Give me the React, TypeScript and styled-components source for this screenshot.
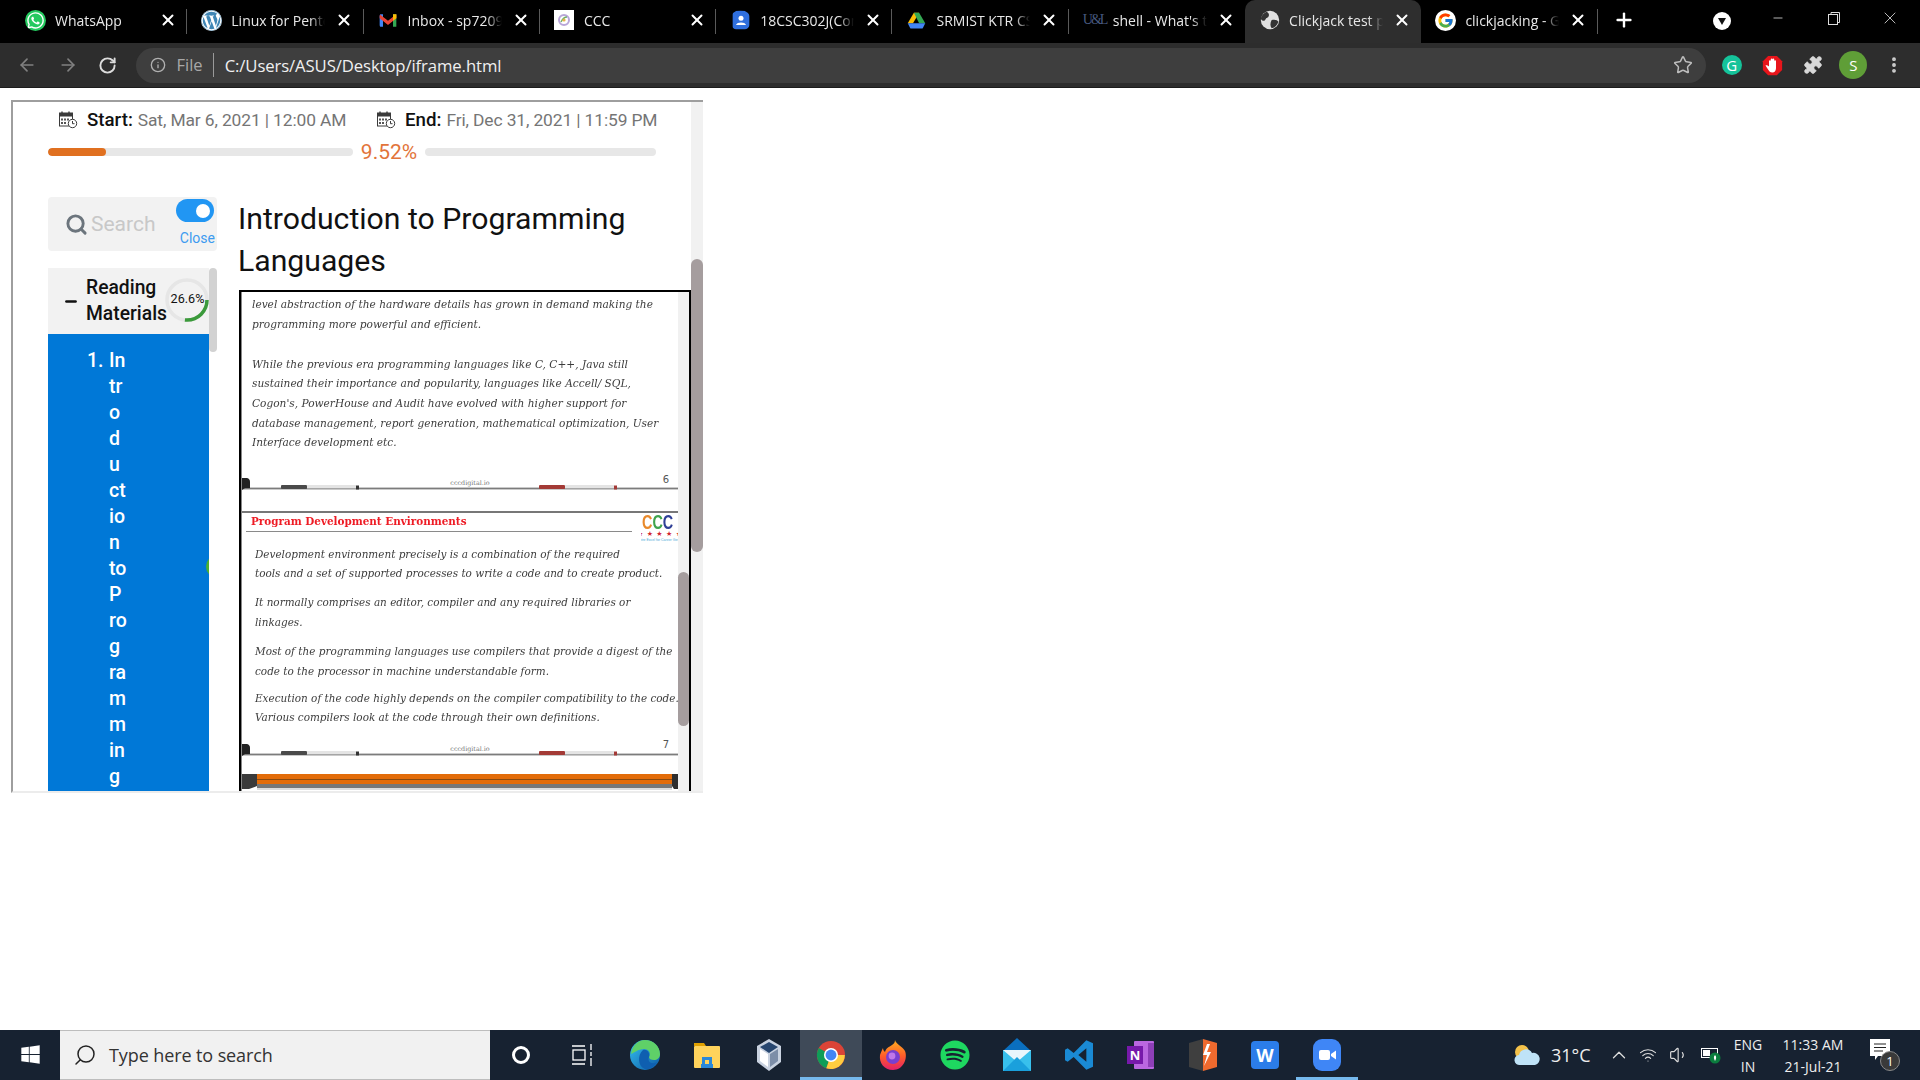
import React from "react";
import styled, { createGlobalStyle } from "styled-components";
import { ArrowLeft, ArrowRight, RotateCw, Info, Star, X, Plus, Minus, Search, EllipsisVertical, Puzzle, ChevronUp, Volume1, Wifi } from "lucide-react";
import { FaWhatsapp, FaWordpress, FaWindows, FaSpotify } from "react-icons/fa";
import { FcGoogle } from "react-icons/fc";

const Global = createGlobalStyle`
  html, body { margin: 0; padding: 0; background: #fff; }
  * { box-sizing: border-box; }
`;

const Screen = styled.div`
  width: 1920px; height: 1080px; display: flex; flex-direction: column; overflow: hidden;
  font-family: Roboto, "Liberation Sans", sans-serif;
`;

/* ---------- tab strip ---------- */
const TabStrip = styled.div`
  height: 43px; flex: none; background: #000; display: flex; padding-left: 11px; align-items: stretch;
`;
const Tab = styled.div<{ $active?: boolean; $sep?: boolean }>`
  width: 176.3px; flex: none; display: flex; align-items: center; padding: 0 0 3px 14px; position: relative; color: #fff;
  background: ${p => (p.$active ? "#2e2e2e" : "transparent")};
  border-radius: ${p => (p.$active ? "10px 10px 0 0" : "0")};
  &::after {
    content: ""; position: absolute; right: 0; top: 9px; height: 25px; width: 1px;
    background: ${p => (p.$sep ? "#5a5a5a" : "transparent")};
  }
`;
const Fav = styled.span<{ $bg?: string }>`
  width: 21px; height: 21px; flex: none; display: flex; align-items: center; justify-content: center;
  border-radius: 50%; background: ${p => p.$bg ?? "transparent"}; overflow: hidden;
`;
const FavSquare = styled.span`
  width: 20px; height: 20px; flex: none; margin-right: 1px; display: flex; align-items: center; justify-content: center; background: #fff;
`;
const FavLetters = styled.span`
  width: 21px; flex: none; font-family: "Liberation Serif", serif; font-size: 14px; color: #47597f; letter-spacing: -2px; white-space: nowrap;
`;
const TabTitle = styled.span`
  margin-left: 9px; width: 94px; flex: none; overflow: hidden; white-space: nowrap;
  font-family: "Open Sans", sans-serif; font-size: 14px; color: #e8e8e8;
  -webkit-mask-image: linear-gradient(to right, #000 84%, transparent 100%);
  mask-image: linear-gradient(to right, #000 84%, transparent 100%);
`;
const TabClose = styled.span`
  width: 18px; height: 18px; flex: none; margin-left: 10px; display: flex; align-items: center; justify-content: center;
`;
const NewTab = styled.span`
  width: 52px; flex: none; display: flex; align-items: center; justify-content: center; padding-bottom: 3px; color: #fff;
`;
const ProfileDot = styled.span`
  width: 18px; height: 18px; margin: 12px 0 0 63px; border-radius: 50%; background: #fff; flex: none;
  display: flex; align-items: center; justify-content: center;
`;
const WinControls = styled.div`
  display: flex; margin-left: 19px; color: #ddd;
`;
const WinButton = styled.span`
  width: 56px; height: 36px; display: flex; align-items: center; justify-content: center;
`;

/* ---------- toolbar ---------- */
const Toolbar = styled.div`
  height: 45px; flex: none; background: #2d2d2d; display: flex; align-items: center; padding-left: 17px;
  border-bottom: 1px solid #1c1c1c; color: #9a9a9a;
`;
const NavButton = styled.span<{ $dim?: boolean }>`
  width: 40.5px; flex: none; display: flex; color: ${p => (p.$dim ? "#808080" : "#dcdcdc")};
`;
const AddressBar = styled.div`
  width: 1570px; height: 35px; margin-left: -3px; border-radius: 18px; background: #3e3e3e; flex: none;
  display: flex; align-items: center; padding: 0 13px 0 14px;
`;
const Scheme = styled.span`
  margin-left: 11px; padding-right: 10px; border-right: 1px solid #9a9a9a; line-height: 24px;
  font-family: "Open Sans", sans-serif; font-size: 16.5px; color: #a8a8a8;
`;
const Url = styled.span`
  margin-left: 11px; font-family: "Open Sans", sans-serif; font-size: 16.7px; color: #f0f0f0; letter-spacing: -0.1px;
`;
const StarSlot = styled.span`
  margin-left: auto; display: flex; color: #bdbdbd;
`;
const Extensions = styled.div`
  display: flex; align-items: center; margin-left: 6px;
`;
const ExtSlot = styled.span`
  width: 40.5px; flex: none; display: flex; align-items: center; justify-content: center;
`;
const Avatar = styled.span`
  width: 28px; height: 28px; border-radius: 50%; background: #5f9e37; color: #fff; font-size: 15px;
  display: flex; align-items: center; justify-content: center; font-family: "Open Sans", sans-serif;
`;
const GrammarlyBadge = styled.span`
  width: 20px; height: 20px; border-radius: 50%; background: #15c39a; color: #fff; font-size: 15px;
  display: flex; align-items: center; justify-content: center; font-family: "Open Sans", sans-serif;
`;

/* ---------- page ---------- */
const Viewport = styled.div`
  flex: 1; min-height: 0; background: #fff; padding: 12px 0 0 11px;
`;
const Frame = styled.div`
  width: 692px; height: 693px; display: flex; overflow: hidden;
  border-top: 2px solid #9e9e9e; border-left: 2px solid #9e9e9e; border-bottom: 2px solid #ececec;
`;
const FramePage = styled.div`
  width: 678px; flex: none; padding-left: 35px; display: flex; flex-direction: column;
`;
const ScrollTrack = styled.div<{ $w: number }>`
  width: ${p => p.$w}px; flex: none; background: #f1f1f1;
`;
const ScrollThumb = styled.div<{ $top: number; $h: number }>`
  margin-top: ${p => p.$top}px; height: ${p => p.$h}px; background: #a59d9e; border-radius: 6px;
`;
const DatesRow = styled.div`
  height: 36px; flex: none; display: flex; align-items: center; padding-left: 11px;
`;
const DateGroup = styled.div`
  display: flex; align-items: center; width: 318px; white-space: nowrap;
  &:last-child { width: auto; }
`;
const DateLabel = styled.b`
  font-weight: 500; color: #111; margin: 0 5px 0 9px; font-size: 18.7px;
`;
const DateValue = styled.span`
  color: #757575; font-size: 17.4px; letter-spacing: -0.12px;
`;
const ProgressRow = styled.div`
  height: 24px; margin-top: 2px; margin-bottom: 33px; flex: none; display: flex; align-items: center;
`;
const Bar = styled.div<{ $w: number }>`
  width: ${p => p.$w}px; height: 8px; border-radius: 4px; background: #e7e7e7; flex: none; overflow: hidden;
`;
const BarFill = styled.div<{ $w: number }>`
  width: ${p => p.$w}px; height: 100%; background: #e07020; border-radius: 4px;
`;
const Percent = styled.span`
  width: 72px; flex: none; text-align: center; font-size: 21px; color: #e2743a;
`;
const Columns = styled.div`
  display: flex; gap: 22px; flex: 1; min-height: 0;
`;
const Sidebar = styled.aside`
  width: 169px; flex: none; display: flex; flex-direction: column; gap: 17px;
`;
const SearchCard = styled.div`
  height: 54px; flex: none; background: #f2f2f2; border-radius: 4px; display: flex; align-items: center; padding: 0 2px 0 17px;
`;
const SearchHint = styled.span`
  margin-left: 3px; font-size: 21px; color: #c8c8c8;
`;
const CloseColumn = styled.div`
  margin-left: auto; align-self: flex-start; padding-top: 2px; display: flex; flex-direction: column; align-items: flex-end;
`;
const Toggle = styled.div`
  width: 38px; height: 23px; border-radius: 12px; background: #2196f3; position: relative; margin-right: 1px;
  &::after {
    content: ""; position: absolute; right: 4px; top: 4.5px; width: 14px; height: 14px; border-radius: 50%; background: #fff;
  }
`;
const CloseLabel = styled.span`
  margin-top: 9px; font-size: 14px; line-height: 14px; color: #3d9bf0;
`;
const Accordion = styled.div`
  flex: 1; min-height: 0; display: flex;
`;
const AccordionBody = styled.div`
  width: 161px; flex: none; display: flex; flex-direction: column;
`;
const AccordionHead = styled.div`
  height: 66px; flex: none; background: #f2f2f2; display: flex; align-items: center; padding-left: 15px;
`;
const AccordionLabel = styled.div`
  margin-left: 7px; width: 79px; flex: none; font-size: 19.3px; font-weight: 500; line-height: 26px; color: #111;
`;
const Ring = styled.div`
  width: 44px; height: 44px; flex: none; position: relative; margin-top: -2px; display: flex; align-items: center; justify-content: center;
  font-size: 12.6px; color: #111; padding: 0 0 3px 1px;
`;
const RingSvg = styled.svg`
  position: absolute; inset: 0;
`;
const ItemList = styled.div`
  flex: 1; min-height: 0; background: #0078d7; padding: 14px 0 0 39px; display: flex; position: relative; overflow: hidden;
  color: #fff; font-size: 19.5px; font-weight: 500; line-height: 26px;
  &::after {
    content: ""; position: absolute; left: 158px; top: 221px; width: 23px; height: 23px; border-radius: 50%; background: #4caf30;
  }
`;
const ItemNumber = styled.span`
  width: 16px; flex: none; text-align: right; margin-right: 6px;
`;
const ItemText = styled.div`
  display: flex; flex-direction: column;
`;
const SideThumbTrack = styled.div`
  width: 8px; flex: none;
`;
const SideThumb = styled.div`
  height: 84px; background: #d2d2d2; border-radius: 4px;
`;
const Main = styled.main`
  flex: 1; min-width: 0; display: flex; flex-direction: column;
`;
const Title = styled.h1`
  margin: 1px 0 8px -1px; font-size: 30.2px; font-weight: 400; line-height: 42px; color: #111; width: 440px;
`;
const DocFrame = styled.div`
  flex: 1; min-height: 0; display: flex; overflow: hidden;
  border-top: 2px solid #000; border-left: 2px solid #000; border-right: 2px solid #000;
`;
const Slides = styled.div`
  width: 437px; flex: none; overflow: hidden; border-left: 1.5px solid #888;
`;
const Para = styled.p<{ $gap?: number }>`
  margin: ${p => p.$gap ?? 0}px 0 0;
`;
const Line = styled.span`
  display: block; height: 19.7px; line-height: 19.7px; white-space: nowrap; filter: blur(0.25px);
`;
const SlideBody = styled.div<{ $top: number; $left: number; $size: number }>`
  padding: ${p => p.$top}px 0 0 ${p => p.$left}px;
  font-family: "DejaVu Serif", serif; font-style: italic; font-size: ${p => p.$size}px; color: #3c3c3c;
`;
const SlideFooter = styled.div<{ $gap: number; $bottom: number }>`
  margin: ${p => p.$gap}px 0 ${p => p.$bottom}px; display: grid; height: 16px;
  & > * { grid-area: 1 / 1; }
`;
const PageNumber = styled.span<{ $top: number }>`
  justify-self: end; margin: ${p => p.$top}px 10px 0 0; line-height: 10px; font-size: 10px; color: #555; font-family: "DejaVu Sans", sans-serif;
`;
const SlideHead = styled.div`
  height: 34px; border-top: 2.5px solid #777; display: flex; overflow: hidden;
`;
const SlideTitleBox = styled.div`
  width: 386px; height: 19px; margin-left: 4px; padding-left: 5px; flex: none; border-bottom: 1px solid #8a8a8a;
  font-family: "DejaVu Serif", serif; font-weight: 700; font-size: 10.4px; line-height: 17px; color: #ee1c25; white-space: nowrap; filter: blur(0.2px);
`;
const LogoBox = styled.div`
  margin-left: 9px; width: 38px; flex: none; overflow: hidden; display: flex; flex-direction: column; align-items: flex-start; white-space: nowrap;
`;
const LogoLetters = styled.div`
  font-family: "Liberation Sans", sans-serif; font-weight: 700; font-size: 20px; line-height: 18px; margin-left: 1px;
  transform: scaleX(0.72); transform-origin: left center;
`;
const LogoLetter = styled.span<{ $c: string }>`
  color: ${p => p.$c};
`;
const LogoStars = styled.div`
  font-size: 7px; line-height: 7px; color: #d22630; letter-spacing: 3.4px; margin-left: -4px; font-family: "DejaVu Sans", sans-serif;
`;
const LogoTag = styled.div`
  font-size: 3.5px; line-height: 5px; color: #4aa8d8; margin-left: -6px; font-family: "Liberation Sans", sans-serif;
`;
const SlideRule = styled.svg`
  display: block;
`;

/* ---------- taskbar ---------- */
const Taskbar = styled.div`
  height: 50px; flex: none; background: #172231; display: flex; color: #fff;
`;
const StartSlot = styled.div`
  width: 60px; flex: none; display: flex; align-items: center; justify-content: center; padding-bottom: 1px;
`;
const TaskSearch = styled.div`
  width: 430px; flex: none; background: #f1f1f1; border-top: 1px solid #bdbdbd; border-bottom: 1px solid #bdbdbd;
  display: flex; align-items: center; padding-left: 13px; color: #222; gap: 12px;
`;
const TaskSearchText = styled.span`
  font-family: "Open Sans", sans-serif; font-size: 18px; color: #333; letter-spacing: -0.1px;
`;
const TaskIcons = styled.div`
  display: flex;
`;
const TaskIcon = styled.div<{ $active?: boolean; $open?: boolean }>`
  width: 62px; flex: none; display: flex; align-items: center; justify-content: center;
  background: ${p => (p.$active ? "#3f4a58" : "transparent")};
  border-bottom: 3px solid ${p => (p.$active || p.$open ? "#76b9ed" : "transparent")};
  padding-top: 3px;
`;
const Cortana = styled.span`
  width: 18px; height: 18px; border-radius: 50%; border: 3px solid #fff;
`;
const IconLetter = styled.span<{ $bg: string }>`
  width: 28px; height: 28px; border-radius: 4px; background: ${p => p.$bg}; color: #fff; font-family: "Open Sans", sans-serif;
  font-weight: 700; font-size: 18px; display: flex; align-items: center; justify-content: center;
`;
const Tray = styled.div`
  margin-left: auto; display: flex; align-items: center; padding-right: 6px; height: 100%;
  font-family: "Open Sans", sans-serif; color: #eee;
`;
const TrayTemp = styled.span`
  font-size: 18px; margin-left: 10px; width: 57px; flex: none;
`;
const TraySlot = styled.span<{ $w: number }>`
  width: ${p => p.$w}px; flex: none; display: flex; align-items: center; color: #ddd;
`;
const TrayStack = styled.div<{ $w: number }>`
  width: ${p => p.$w}px; flex: none; display: flex; flex-direction: column; gap: 5px; align-items: center; font-size: 14px; line-height: 17px;
`;
const NoteSlot = styled.div`
  width: 30px; height: 32px; flex: none; position: relative; margin-left: 10px; margin-right: 14px;
`;
const NoteBadge = styled.span`
  position: absolute; right: 0; bottom: 0; width: 20px; height: 20px; border-radius: 50%; background: #3a3a3a; border: 1px solid #888;
  font-size: 13px; display: flex; align-items: center; justify-content: center; color: #fff;
`;

/* ---------- small drawings ---------- */
const GmailIcon = () => (
  <svg width="20" height="20" viewBox="0 0 24 24">
    <path d="M2 5h4v15H2z" fill="#4285f4" /><path d="M18 5h4v15h-4z" fill="#34a853" />
    <path d="M2 5l10 8 10-8v5l-10 8L2 10z" fill="#ea4335" /><path d="M18 5h4v5l-4 3z" fill="#fbbc04" />
  </svg>
);
const CccFav = () => (
  <svg width="14" height="14" viewBox="0 0 14 14" fill="none">
    <circle cx="7" cy="7" r="5" stroke="#b9a6d9" strokeWidth="2" /><path d="M4 9c2-4 4-5 6-5" stroke="#6fae6a" strokeWidth="1.5" /><circle cx="7" cy="7" r="1.6" fill="#e8b04a" />
  </svg>
);
const ContactsIcon = () => (
  <svg width="20" height="20" viewBox="0 0 24 24">
    <rect x="2" y="1" width="20" height="22" rx="2" fill="#2f6fde" /><circle cx="12" cy="10" r="3" fill="#fff" /><path d="M6 18c1-4 11-4 12 0z" fill="#fff" />
  </svg>
);
const DriveIcon = () => (
  <svg width="21" height="21" viewBox="0 0 24 24">
    <path d="M9 3h6l-7 12H2z" fill="#fbbc04" /><path d="M15 3l7 12h-7L9 3z" fill="#34a853" /><path d="M2 15l3 6h14l3-6z" fill="#4285f4" />
  </svg>
);
const GlobeIcon = () => (
  <svg width="20" height="20" viewBox="0 0 24 24">
    <circle cx="12" cy="12" r="11" fill="#e0e0e0" /><path d="M8 2c4 2 3 6 1 7-3 1-2 4-5 4-2 0-3-2-3-3 1-4 4-7 7-8zM14 12c4-1 7 0 8 2-1 4-4 7-8 8-2-3-2-6 0-10z" fill="#333" />
  </svg>
);
const StopIcon = () => (
  <svg width="21" height="21" viewBox="0 0 24 24">
    <path d="M7 1h10l6 6v10l-6 6H7l-6-6V7z" fill="#e8151b" /><path d="M8 12V7a1 1 0 012 0V5a1 1 0 012 0 1 1 0 012 0v2a1 1 0 012 0v8c0 3-2 5-4 5-3 0-4-2-6-5l-2-3c1-1 3 0 4 1z" fill="#fff" />
  </svg>
);
const PuzzleIcon = () => <Puzzle size={20} color="#d8d8d8" fill="#d8d8d8" strokeWidth={1} />;
const CalendarIcon = () => (
  <svg width="19" height="18" viewBox="0 0 19 18" fill="none">
    <rect x="0.5" y="2" width="13" height="13" fill="#fff" stroke="#3a3a3a" /><rect x="0.5" y="2" width="13" height="3.5" fill="#3a3a3a" />
    <path d="M3 0.5v3M10 0.5v3" stroke="#3a3a3a" strokeWidth="1.4" />
    <path d="M2 7.5h2v2H2zM5 7.5h2v2H5zM8 7.5h2v2H8zM2 11h2v2H2zM5 11h2v2H5z" fill="#555" />
    <circle cx="13.5" cy="12.5" r="4.2" fill="#fff" stroke="#3a3a3a" /><path d="M13.5 10v2.7h2" stroke="#3a3a3a" />
  </svg>
);
const SlideFootArt = () => (
  <SlideRule width="437" height="16" viewBox="0 0 437 16">
    <rect x="0" y="12.6" width="437" height="1.8" fill="#7c7c7c" />
    <path d="M0 3h5a4 4 0 013 4v6H3L0 15z" fill="#222" />
    <rect x="39" y="10" width="26" height="4" rx="1" fill="#4a4a4a" /><rect x="65" y="10" width="49" height="3.4" fill="#e4e4e4" /><rect x="114" y="10.5" width="3" height="4" fill="#333" />
    <rect x="297" y="10" width="26" height="4" rx="1" fill="#a33a36" /><rect x="323" y="10" width="49" height="3.4" fill="#e4e4e4" /><rect x="372" y="10.5" width="3" height="4" fill="#a33a36" />
    <text x="228" y="10" textAnchor="middle" fontSize="6.4" fontFamily="DejaVu Serif" fill="#777">cccdigital.io</text>
  </SlideRule>
);
const OrangeArt = () => (
  <SlideRule width="437" height="16" viewBox="0 0 437 16">
    <rect x="15" y="0" width="415" height="10" fill="#e36c09" /><rect x="15" y="5" width="415" height="1" fill="#8a4a10" />
    <rect x="15" y="10" width="415" height="4" fill="#777" /><rect x="15" y="14" width="415" height="2" fill="#ddd" />
    <path d="M0 0h15v12l-8 3H0z" fill="#3a3a3a" /><path d="M430 0h7v15h-5l-2-3z" fill="#2e2e2e" />
  </SlideRule>
);
const EdgeIcon = () => (
  <svg width="32" height="32" viewBox="0 0 32 32">
    <defs><linearGradient id="eg" x1="0" y1="0" x2="1" y2="1"><stop offset="0" stopColor="#35c1f1" /><stop offset="1" stopColor="#0c59a4" /></linearGradient></defs>
    <circle cx="16" cy="16" r="15" fill="url(#eg)" />
    <path d="M16 1c8 0 15 6 15 14 0 4-3 6-6 6-3 0-5-1-5-3 2-2 1-8-5-8-6 0-10 4-13 5C3 7 9 1 16 1z" fill="#5fd068" />
    <path d="M14 11c4-1 7 2 6 7-2 5 3 8 8 5-3 5-8 8-12 7-7-2-8-14-2-19z" fill="#0f5fb0" />
  </svg>
);
const FolderIcon = () => (
  <svg width="30" height="30" viewBox="0 0 30 30">
    <path d="M2 3h10l2 3h-12z" fill="#e0a000" /><rect x="2" y="6" width="26" height="22" rx="1" fill="#ffd35c" /><path d="M10 24v-7h10v7h-3v-4h-4v4z" fill="#2b88d8" /><rect x="9" y="24" width="12" height="4" fill="#2b88d8" />
  </svg>
);
const CubeIcon = () => (
  <svg width="28" height="34" viewBox="0 0 28 34">
    <path d="M14 1l12 7v16l-12 9-12-9V8z" fill="#c9d2e0" /><path d="M14 4l9 5-9 6-9-6z" fill="#27466f" /><path d="M5 11l8 5v13l-8-6z" fill="#fff" /><path d="M23 11l-8 5v13l8-6z" fill="#7d8ea8" />
  </svg>
);
const ChromeIcon = () => (
  <svg width="30" height="30" viewBox="0 0 32 32">
    <circle cx="16" cy="16" r="15" fill="#db4437" /><path d="M16 16L3 8.5A15 15 0 0011 30.2z" fill="#0f9d58" /><path d="M16 16h14.8A15 15 0 0111 30.2z" fill="#ffcd40" />
    <circle cx="16" cy="16" r="7.5" fill="#fff" /><circle cx="16" cy="16" r="5.8" fill="#4285f4" />
  </svg>
);
const FirefoxIcon = () => (
  <svg width="30" height="32" viewBox="0 0 30 32">
    <defs><linearGradient id="ff" x1="0" y1="0" x2="0" y2="1"><stop offset="0" stopColor="#ffb020" /><stop offset=".55" stopColor="#ff5a2a" /><stop offset="1" stopColor="#e3206a" /></linearGradient></defs>
    <path d="M17 1c1 4 7 6 10 11 3 8-2 19-12 19C6 31 1 24 2 16c1-3 2-5 3-7 0 2 1 3 2 4 1-4 4-5 7-7 2-1 3-3 3-5z" fill="url(#ff)" />
    <circle cx="15" cy="18" r="7" fill="#7a3fd0" /><circle cx="14" cy="17" r="3.4" fill="#f8a8ff" opacity=".55" />
  </svg>
);
const MailIcon = () => (
  <svg width="32" height="34" viewBox="0 0 32 34">
    <path d="M16 0l14 13H2z" fill="#0a6fbf" /><rect x="2" y="12" width="28" height="21" fill="#38c0ec" /><path d="M2 12h28L16 24z" fill="#e8f6fc" /><path d="M2 33l14-14 14 14z" fill="#1aa0dc" />
  </svg>
);
const VSCodeIcon = () => (
  <svg width="32" height="34" viewBox="0 0 24 24">
    <path d="M17.5 1L8 10.5 3.5 7 1.5 8v8l2 1L8 13.5 17.5 23l5-2.2V3.2zM17.5 7v10l-6-5z" fill="#1a8ad4" fillRule="evenodd" />
  </svg>
);
const OneNoteIcon = () => (
  <svg width="32" height="30" viewBox="0 0 32 30">
    <rect x="9" y="1" width="20" height="28" rx="1" fill="#ba67e0" /><rect x="23" y="3" width="6" height="24" fill="#8e3fb8" />
    <rect x="2" y="6" width="16" height="18" fill="#7719aa" />
    <text x="10" y="20" textAnchor="middle" fontSize="13" fontWeight="700" fill="#fff" fontFamily="Open Sans">N</text>
  </svg>
);
const BoltBoxIcon = () => (
  <svg width="30" height="34" viewBox="0 0 30 34">
    <path d="M1 5l14-4v32L1 29z" fill="#3f3f3f" /><path d="M15 1l14 4v24l-14 4z" fill="#ef6a2e" /><path d="M19 6l-4 11h4l-3 11 7-14h-4l3-8z" fill="#fff" />
  </svg>
);
const ZoomIcon = () => (
  <svg width="30" height="34" viewBox="0 0 30 34">
    <rect x="1" y="1" width="28" height="32" rx="9" fill="#3f86f6" /><rect x="7" y="12" width="11" height="10" rx="2" fill="#fff" /><path d="M19 16l5-3.5v9L19 18z" fill="#fff" />
  </svg>
);
const TaskViewIcon = () => (
  <svg width="22" height="22" viewBox="0 0 22 22" fill="none" stroke="#fff" strokeWidth="1.3">
    <path d="M0 2h13M0 20h13" /><rect x="1" y="6" width="12" height="10" /><path d="M19 0v6M19 8v4M19 14v8" />
  </svg>
);
const WeatherIcon = () => (
  <svg width="27" height="22" viewBox="0 0 27 22">
    <circle cx="8" cy="8" r="7" fill="#f4c24a" /><path d="M6 21a5 5 0 01-1-10 7 7 0 0113-2 6 6 0 013 12z" fill="#bfe3f7" />
  </svg>
);
const BatteryIcon = () => (
  <svg width="21" height="18" viewBox="0 0 21 18" fill="none">
    <rect x="0.5" y="2.5" width="16" height="9" stroke="#fff" /><rect x="2" y="4" width="7" height="6" fill="#fff" /><circle cx="14" cy="12" r="5.5" fill="#0b7d3e" /><path d="M14 9c-2 2-1 4 0 6 1-2 2-4 0-6z" fill="#fff" />
  </svg>
);
const NoteIcon = () => (
  <svg width="20" height="24" viewBox="0 0 20 24" fill="none">
    <path d="M0 0h20v17H8l-3 4v-4H0z" fill="#fff" /><path d="M4 5h12M4 8.5h12M4 12h9" stroke="#222" strokeWidth="1.2" />
  </svg>
);
const DropdownGlyph = () => (
  <svg width="8" height="7" viewBox="0 0 8 7"><path d="M0 0h8L4 7z" fill="#111" /></svg>
);
const RestoreIcon = () => (
  <svg width="12" height="13" viewBox="0 0 12 13" fill="none" stroke="#ddd"><rect x="0.5" y="2.5" width="9" height="10" /><path d="M3 2.5v-2h8.5v10h-2" /></svg>
);

const tabs: { title: string; icon: React.ReactNode; sep?: boolean; active?: boolean }[] = [
  { title: "WhatsApp", sep: true, icon: <Fav $bg="#25c95f"><FaWhatsapp size={19} color="#fff" /></Fav> },
  { title: "Linux for Pentesters", sep: true, icon: <Fav $bg="#fff"><FaWordpress size={21} color="#3f86b5" /></Fav> },
  { title: "Inbox - sp7209@srmist", sep: true, icon: <Fav><GmailIcon /></Fav> },
  { title: "CCC", sep: true, icon: <FavSquare><CccFav /></FavSquare> },
  { title: "18CSC302J(Computer", sep: true, icon: <Fav><ContactsIcon /></Fav> },
  { title: "SRMIST KTR CSE Drive", sep: true, icon: <Fav><DriveIcon /></Fav> },
  { title: "shell - What's the diff", icon: <FavLetters>U&amp;L</FavLetters> },
  { title: "Clickjack test page", active: true, icon: <Fav><GlobeIcon /></Fav> },
  { title: "clickjacking - Google", sep: true, icon: <Fav $bg="#fff"><FcGoogle size={17} /></Fav> },
];

const letters = ["In", "tr", "o", "d", "u", "ct", "io", "n", "to", "P", "ro", "g", "ra", "m", "m", "in", "g", "L"];

export default function App() {
  return (
    <Screen>
      <Global />
      <TabStrip>
        {tabs.map(t => (
          <Tab key={t.title} $active={t.active} $sep={t.sep}>
            {t.icon}
            <TabTitle>{t.title}</TabTitle>
            <TabClose><X size={18} strokeWidth={2.6} color="#fff" /></TabClose>
          </Tab>
        ))}
        <NewTab><Plus size={22} strokeWidth={2.6} /></NewTab>
        <ProfileDot><DropdownGlyph /></ProfileDot>
        <WinControls>
          <WinButton><Minus size={14} strokeWidth={1.4} /></WinButton>
          <WinButton><RestoreIcon /></WinButton>
          <WinButton><X size={20} strokeWidth={1} /></WinButton>
        </WinControls>
      </TabStrip>

      <Toolbar>
        <NavButton $dim><ArrowLeft size={20} /></NavButton>
        <NavButton $dim><ArrowRight size={20} /></NavButton>
        <NavButton><RotateCw size={19} strokeWidth={2.4} /></NavButton>
        <AddressBar>
          <Info size={16} color="#b0b0b0" />
          <Scheme>File</Scheme>
          <Url>C:/Users/ASUS/Desktop/iframe.html</Url>
          <StarSlot><Star size={20} strokeWidth={1.8} /></StarSlot>
        </AddressBar>
        <Extensions>
          <ExtSlot><GrammarlyBadge>G</GrammarlyBadge></ExtSlot>
          <ExtSlot><StopIcon /></ExtSlot>
          <ExtSlot><PuzzleIcon /></ExtSlot>
          <ExtSlot><Avatar>S</Avatar></ExtSlot>
          <ExtSlot><EllipsisVertical size={20} color="#d0d0d0" strokeWidth={2.6} /></ExtSlot>
        </Extensions>
      </Toolbar>

      <Viewport>
        <Frame>
          <FramePage>
            <DatesRow>
              <DateGroup><CalendarIcon /><DateLabel>Start:</DateLabel><DateValue>Sat, Mar 6, 2021 | 12:00 AM</DateValue></DateGroup>
              <DateGroup><CalendarIcon /><DateLabel>End:</DateLabel><DateValue>Fri, Dec 31, 2021 | 11:59 PM</DateValue></DateGroup>
            </DatesRow>
            <ProgressRow>
              <Bar $w={305}><BarFill $w={58} /></Bar>
              <Percent>9.52%</Percent>
              <Bar $w={231} />
            </ProgressRow>
            <Columns>
              <Sidebar>
                <SearchCard>
                  <Search size={23} color="#6c757d" strokeWidth={3} />
                  <SearchHint>Search</SearchHint>
                  <CloseColumn>
                    <Toggle />
                    <CloseLabel>Close</CloseLabel>
                  </CloseColumn>
                </SearchCard>
                <Accordion>
                  <AccordionBody>
                    <AccordionHead>
                      <Minus size={17} strokeWidth={3.6} color="#111" />
                      <AccordionLabel>Reading Materials</AccordionLabel>
                      <Ring>
                        <RingSvg width="44" height="44" viewBox="0 0 44 44" fill="none">
                          <circle cx="22" cy="22" r="20" stroke="#e6e6e6" strokeWidth="3.5" />
                          <circle cx="22" cy="22" r="20" stroke="#3b9a3b" strokeWidth="3.5" strokeDasharray="33.4 125.7" />
                        </RingSvg>
                        26.6%
                      </Ring>
                    </AccordionHead>
                    <ItemList>
                      <ItemNumber>1.</ItemNumber>
                      <ItemText>
                        {letters.map((l, i) => <span key={i}>{l}</span>)}
                      </ItemText>
                    </ItemList>
                  </AccordionBody>
                  <SideThumbTrack><SideThumb /></SideThumbTrack>
                </Accordion>
              </Sidebar>
              <Main>
                <Title>Introduction to Programming Languages</Title>
                <DocFrame>
                  <Slides>
                    <SlideBody $top={3} $left={10} $size={10.58}>
                      <Para>
                        <Line>level abstraction of the hardware details has grown in demand making the</Line>
                        <Line>programming more powerful and efficient.</Line>
                      </Para>
                      <Para $gap={20.2}>
                        <Line>While the previous era programming languages like C, C++, Java still</Line>
                        <Line>sustained their importance and popularity, languages like Accell/ SQL,</Line>
                        <Line>Cogon's, PowerHouse and Audit have evolved with higher support for</Line>
                        <Line>database management, report generation, mathematical optimization, User</Line>
                        <Line>Interface development etc.</Line>
                      </Para>
                    </SlideBody>
                    <SlideFooter $gap={22.4} $bottom={19.4}>
                      <SlideFootArt />
                      <PageNumber $top={-0.5}>6</PageNumber>
                    </SlideFooter>
                    <SlideHead>
                      <SlideTitleBox>Program Development Environments</SlideTitleBox>
                      <LogoBox>
                        <LogoLetters>
                          <LogoLetter $c="#e8892b">C</LogoLetter><LogoLetter $c="#3fa34d">C</LogoLetter><LogoLetter $c="#2e3f96">C</LogoLetter>
                        </LogoLetters>
                        <LogoStars>★★★★★</LogoStars>
                        <LogoTag>Centre Excel for Career Gene</LogoTag>
                      </LogoBox>
                    </SlideHead>
                    <SlideBody $top={0} $left={13} $size={10.44}>
                      <Para>
                        <Line>Development environment precisely is a combination of the required</Line>
                        <Line>tools and a set of supported processes to write a code and to create product.</Line>
                      </Para>
                      <Para $gap={9.3}>
                        <Line>It normally comprises an editor, compiler and any required libraries or</Line>
                        <Line>linkages.</Line>
                      </Para>
                      <Para $gap={9.3}>
                        <Line>Most of the programming languages use compilers that provide a digest of the</Line>
                        <Line>code to the processor in machine understandable form.</Line>
                      </Para>
                      <Para $gap={7.3}>
                        <Line>Execution of the code highly depends on the compiler compatibility to the code.</Line>
                        <Line>Various compilers look at the code through their own definitions.</Line>
                      </Para>
                    </SlideBody>
                    <SlideFooter $gap={13} $bottom={17}>
                      <SlideFootArt />
                      <PageNumber $top={-1}>7</PageNumber>
                    </SlideFooter>
                    <OrangeArt />
                  </Slides>
                  <ScrollTrack $w={11}>
                    <ScrollThumb $top={280} $h={154} />
                  </ScrollTrack>
                </DocFrame>
              </Main>
            </Columns>
          </FramePage>
          <ScrollTrack $w={12}>
            <ScrollThumb $top={157} $h={293} />
          </ScrollTrack>
        </Frame>
      </Viewport>

      <Taskbar>
        <StartSlot><FaWindows size={21} color="#fff" /></StartSlot>
        <TaskSearch>
          <Search size={24} strokeWidth={1.5} style={{ transform: "scaleX(-1)" }} />
          <TaskSearchText>Type here to search</TaskSearchText>
        </TaskSearch>
        <TaskIcons>
          <TaskIcon><Cortana /></TaskIcon>
          <TaskIcon><TaskViewIcon /></TaskIcon>
          <TaskIcon><EdgeIcon /></TaskIcon>
          <TaskIcon><FolderIcon /></TaskIcon>
          <TaskIcon><CubeIcon /></TaskIcon>
          <TaskIcon $active><ChromeIcon /></TaskIcon>
          <TaskIcon><FirefoxIcon /></TaskIcon>
          <TaskIcon><FaSpotify size={30} color="#1ed760" /></TaskIcon>
          <TaskIcon><MailIcon /></TaskIcon>
          <TaskIcon><VSCodeIcon /></TaskIcon>
          <TaskIcon><OneNoteIcon /></TaskIcon>
          <TaskIcon><BoltBoxIcon /></TaskIcon>
          <TaskIcon><IconLetter $bg="#2b7de9">W</IconLetter></TaskIcon>
          <TaskIcon $open><ZoomIcon /></TaskIcon>
        </TaskIcons>
        <Tray>
          <WeatherIcon />
          <TrayTemp>31°C</TrayTemp>
          <TraySlot $w={31}><ChevronUp size={22} strokeWidth={1.4} /></TraySlot>
          <TraySlot $w={30}><Wifi size={18} strokeWidth={1.5} /></TraySlot>
          <TraySlot $w={32}><Volume1 size={20} strokeWidth={1.4} /></TraySlot>
          <TraySlot $w={29}><BatteryIcon /></TraySlot>
          <TrayStack $w={36}><span>ENG</span><span>IN</span></TrayStack>
          <TrayStack $w={94}><span>11:33 AM</span><span>21-Jul-21</span></TrayStack>
          <NoteSlot><NoteIcon /><NoteBadge>1</NoteBadge></NoteSlot>
        </Tray>
      </Taskbar>
    </Screen>
  );
}
